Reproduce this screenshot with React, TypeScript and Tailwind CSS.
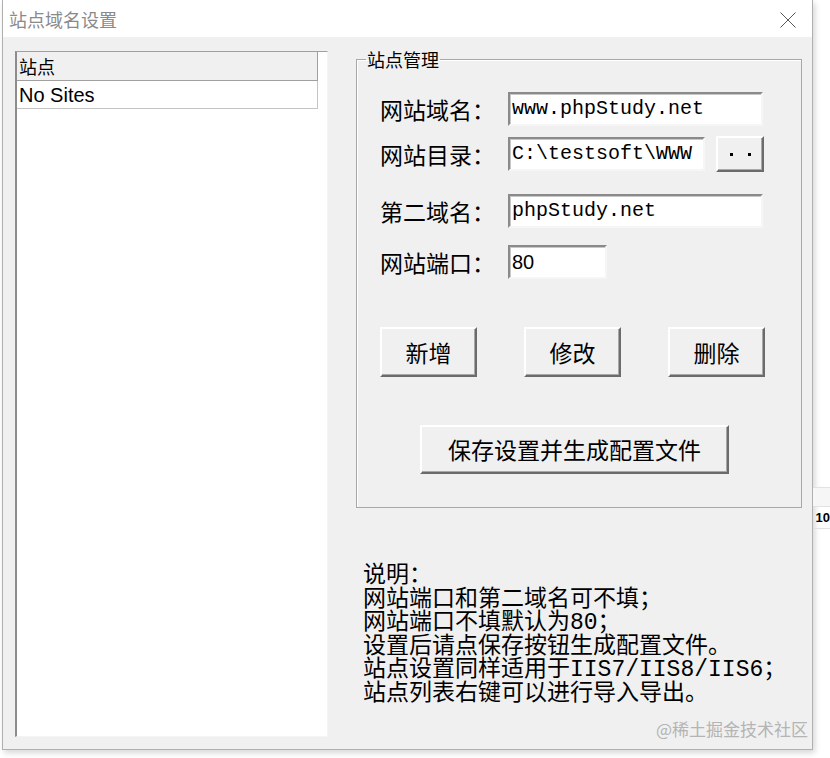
import React from "react";

const cjk = "font-['Noto_Sans_CJK_SC',sans-serif]";
const mono = "font-['Liberation_Mono','Noto_Sans_CJK_SC',monospace]";

function Field({ children, w, sans }: { children: React.ReactNode; w: string; sans?: boolean }) {
  return (
    <div
      className={`${w} h-[34px] bg-white border-2 border-t-[#8a8a8a] border-l-[#8a8a8a] border-b-[#f6f6f6] border-r-[#f6f6f6] shadow-[inset_1px_1px_0_#c8c8c8] flex items-center pl-[2px] text-[20px] text-black ${
        sans ? "font-['Liberation_Sans',sans-serif]" : mono
      }`}
    >
      {children}
    </div>
  );
}

function Btn({ children, w, h }: { children: React.ReactNode; w: string; h: string }) {
  return (
    <button
      className={`${w} ${h} bg-[#f0f0f0] border-2 border-t-white border-l-white border-b-[#6b6b6b] border-r-[#6b6b6b] shadow-[inset_-1px_-1px_0_#a8a8a8] flex items-center justify-center text-[23px] text-black ${cjk}`}
    >
      {children}
    </button>
  );
}

function Label({ children }: { children: React.ReactNode }) {
  return <div className={`w-[128px] text-[23px] leading-[28px] text-black ${cjk}`}>{children}</div>;
}

export default function App() {
  return (
    <div className={`w-[830px] h-[758px] bg-white overflow-hidden flex ${cjk}`}>
      {/* dialog window */}
      <div className="ml-[2px] w-[813px] h-[750px] flex flex-col border-x border-b border-[#b0b0b0] shadow-[2px_3px_6px_rgba(0,0,0,0.16)]">
        {/* title bar */}
        <div className="h-[37px] shrink-0 bg-white flex items-center justify-between pl-[6px] pr-[16px]">
          <span className="text-[18px] leading-[22px] text-[#8a8a8a]">站点域名设置</span>
          <svg width="16" height="16" viewBox="0 0 16 16" className="mt-[2px]">
            <path d="M0.5 0.5 L15.5 15.5 M15.5 0.5 L0.5 15.5" stroke="#5a5a5a" strokeWidth="1" fill="none" />
          </svg>
        </div>

        {/* client area */}
        <div className="flex-1 bg-[#f0f0f0] flex">
          {/* site list */}
          <div className="ml-[12px] mt-[14px] mb-[12px] w-[313px] bg-white border-t border-l-2 border-t-[#a0a0a0] border-l-[#8c8c8c] border-r border-b border-r-[#f4f4f4] border-b-[#f4f4f4]">
            <div className="w-[301px] h-[29px] bg-[#f0f0f0] border-r border-b border-[#a0a0a0] flex items-center pl-[2px] text-[18px] text-black">
              站点
            </div>
            <div className="w-[301px] h-[28px] border-r border-b border-[#c4c4c4] flex items-center pl-[2px] text-[20px] text-black font-['Liberation_Sans',sans-serif]">
              No Sites
            </div>
          </div>

          {/* right column */}
          <div className="ml-[28px] w-[446px] flex flex-col">
            <fieldset className="mt-[11px] h-[460px] border border-[#a8a8a8] shadow-[inset_1px_1px_0_#ffffff]">
              <legend className="ml-[9px] px-[1px] text-[18px] leading-[22px] text-black">站点管理</legend>

              <div className="pl-[23px] flex flex-col">
                <div className="mt-[22px] flex items-center">
                  <Label>网站域名：</Label>
                  <Field w="w-[255px]">www.phpStudy.net</Field>
                </div>
                <div className="mt-[10px] flex items-center">
                  <Label>网站目录：</Label>
                  <Field w="w-[197px]">C:\testsoft\WWW</Field>
                  <button className="ml-[11px] w-[48px] h-[36px] bg-[#f0f0f0] border-2 border-t-white border-l-white border-b-[#6b6b6b] border-r-[#6b6b6b] shadow-[inset_-1px_-1px_0_#a8a8a8] flex items-center justify-center gap-[15px]">
                    <span className="w-[3px] h-[3px] bg-black" />
                    <span className="w-[3px] h-[3px] bg-black" />
                  </button>
                </div>
                <div className="mt-[22px] flex items-center">
                  <Label>第二域名：</Label>
                  <Field w="w-[255px]">phpStudy.net</Field>
                </div>
                <div className="mt-[17px] flex items-center">
                  <Label>网站端口：</Label>
                  <Field w="w-[99px]" sans>
                    80
                  </Field>
                </div>

                <div className="mt-[48px] flex gap-[47px]">
                  <Btn w="w-[97px]" h="h-[50px]">新增</Btn>
                  <Btn w="w-[97px]" h="h-[50px]">修改</Btn>
                  <Btn w="w-[97px]" h="h-[50px]">删除</Btn>
                </div>

                <div className="mt-[48px] ml-[40px]">
                  <Btn w="w-[309px]" h="h-[49px]">保存设置并生成配置文件</Btn>
                </div>
              </div>
            </fieldset>

            {/* notes */}
            <div className={`mt-[57px] ml-[7px] text-[23px] leading-[23.5px] text-black ${mono}`}>
              <div>说明：</div>
              <div>网站端口和第二域名可不填；</div>
              <div>网站端口不填默认为80；</div>
              <div>设置后请点保存按钮生成配置文件。</div>
              <div>站点设置同样适用于IIS7/IIS8/IIS6；</div>
              <div>站点列表右键可以进行导入导出。</div>
            </div>

            <div className="mt-auto mb-[10px] mr-[-6px] self-end text-[17px] leading-[20px] text-[#b4b4b4]">
              @稀土掘金技术社区
            </div>
          </div>
        </div>
      </div>

      {/* edge of the window behind */}
      <div className="flex-1 flex flex-col">
        <div className="mt-[487px] h-[20px] border-y border-[#e2e2e2] bg-[#f6f6f6]" />
        <div className="h-[22px] border-b border-[#e2e2e2] pl-[3px] text-[13px] leading-[22px] font-bold text-black font-['Liberation_Sans',sans-serif] overflow-hidden whitespace-nowrap">
          10
        </div>
      </div>
    </div>
  );
}
